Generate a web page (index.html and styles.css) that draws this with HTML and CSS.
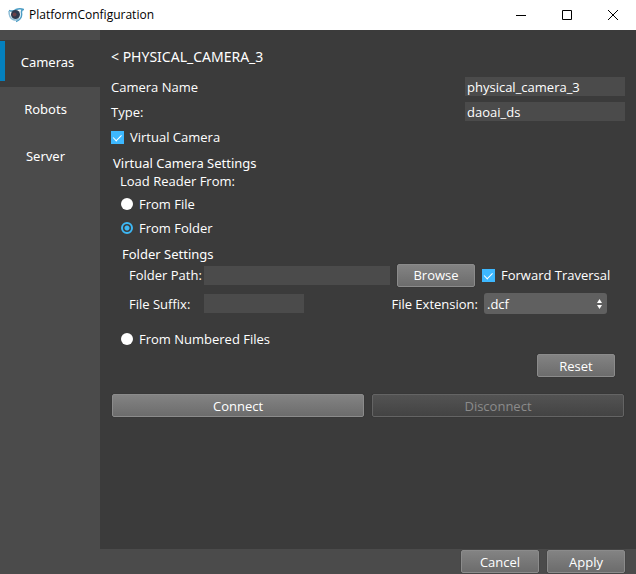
FILE: index.html
```html
<!DOCTYPE html>
<html lang="en">
<head>
    <meta charset="utf-8">
    <title>PlatformConfiguration</title>
    <link rel="stylesheet" href="styles.css">
</head>
<body>
    <header class="titlebar">
        <svg class="logo" width="16" height="16" viewBox="0 0 16 16">
            <path d="M1 3.500 Q5 5 8 2.500 Q12 1 15.500 2.500 Q13 3 13.500 6 Q14.500 12 8 14.500" fill="none" stroke="#4b9cc4" stroke-width="1.5"/>
            <path d="M1 4 Q1 11 5 12.500 Q9 14 12 11" fill="none" stroke="#8fbdd6" stroke-width="1.5"/>
            <circle cx="7.500" cy="7.500" r="4.500" fill="#2e3a50"/>
            <circle cx="6.500" cy="7.500" r="2" fill="#6a4048"/>
        </svg>
        <span class="window-title">PlatformConfiguration</span>
        <button class="win-btn" aria-label="Minimize"><svg width="12" height="12" viewBox="0 0 12 12"><path d="M1 6.500h10"/></svg></button>
        <button class="win-btn" aria-label="Maximize"><svg width="12" height="12" viewBox="0 0 12 12"><path d="M1.500 1.500h9v9h-9z"/></svg></button>
        <button class="win-btn" aria-label="Close"><svg width="12" height="12" viewBox="0 0 12 12"><path d="M1 1l10 10M11 1L1 11"/></svg></button>
    </header>

    <div class="main">
        <nav class="sidebar">
            <a href="#cameras" class="tab active">Cameras</a>
            <a href="#robots" class="tab">Robots</a>
            <a href="#server" class="tab">Server</a>
        </nav>

        <form class="content">
            <a href="#cameras" class="back">&lt; PHYSICAL_CAMERA_3</a>

            <div class="row">
                <label for="name">Camera Name</label>
                <input type="text" id="name" class="field" value="physical_camera_3">
            </div>
            <div class="row">
                <label for="type">Type:</label>
                <input type="text" id="type" class="field" value="daoai_ds">
            </div>
            <label class="option"><input type="checkbox" checked>Virtual Camera</label>

            <section class="settings">
                <h2>Virtual Camera Settings</h2>
                <div class="reader">
                    <h3 class="caption">Load Reader From:</h3>
                    <label class="option"><input type="radio" name="reader">From File</label>
                    <label class="option"><input type="radio" name="reader" checked>From Folder</label>

                    <div class="folder">
                        <h3>Folder Settings</h3>
                        <div class="folder-row path-row">
                            <label for="path" class="field-label">Folder Path:</label>
                            <input type="text" id="path" class="field">
                            <button type="button" class="btn">Browse</button>
                            <label class="option traversal"><input type="checkbox" checked>Forward Traversal</label>
                        </div>
                        <div class="folder-row">
                            <label for="suffix" class="field-label">File Suffix:</label>
                            <input type="text" id="suffix" class="field suffix">
                            <label for="ext" class="ext-label">File Extension:</label>
                            <div class="select">
                                <select id="ext"><option>.dcf</option></select>
                                <svg width="5" height="10" viewBox="0 0 5 10"><path d="M0 4L2.500 0L5 4zM0 6L2.500 10L5 6z" fill="#fff"/></svg>
                            </div>
                        </div>
                    </div>

                    <label class="option"><input type="radio" name="reader">From Numbered Files</label>
                </div>
            </section>

            <div class="reset">
                <button type="button" class="btn">Reset</button>
            </div>
            <div class="connection">
                <button type="button" class="btn">Connect</button>
                <button type="button" class="btn" disabled>Disconnect</button>
            </div>
        </form>
    </div>

    <footer class="footer">
        <button class="btn">Cancel</button>
        <button class="btn">Apply</button>
    </footer>
</body>
</html>
```
FILE: styles.css
```css
* { box-sizing: border-box; }
body {
    margin: 0;
    min-height: 100vh;
    display: flex;
    flex-direction: column;
    background: #4b4b4b;
    color: #fff;
    font: 13px/18px "Open Sans", sans-serif;
}
button, input, select { font: inherit; color: inherit; margin: 0; }
a { color: inherit; text-decoration: none; }
h2, h3 { margin: 0; font: 13px/18px "Noto Sans", sans-serif; }
h3.caption { font-family: "Open Sans", sans-serif; }

/* window title bar */
.titlebar { display: flex; align-items: center; height: 30px; padding-left: 8px; background: #fff; color: #000; }
.window-title { flex: 1; margin-left: 5px; font-size: 12px; }
.win-btn { display: flex; align-items: center; justify-content: center; width: 46px; height: 28px; padding: 0; border: 0; background: none; }
.win-btn path { fill: none; stroke: #000; }

.main { flex: 1; display: flex; }

.sidebar { width: 100px; padding-top: 10px; flex-shrink: 0; font-family: "Noto Sans", sans-serif; }
.tab { position: relative; display: block; height: 47px; padding-right: 9px; line-height: 45px; text-align: center; }
.tab.active { padding-right: 5px; background: #3b3b3b; }
.tab.active::before { content: ""; position: absolute; left: 0; top: 1px; width: 5px; height: 40px; background: #0480be; }

.content { flex: 1; min-width: 0; padding: 17px 11px 0; background: #3b3b3b; }
.back { display: block; margin-bottom: 10px; font: 14px/20px "Noto Sans", sans-serif; }
.row { display: flex; justify-content: space-between; align-items: center; height: 19px; margin-bottom: 6px; }
.field { width: 160px; height: 19px; padding: 0 2px; border: 0; background: #4b4b4b; outline: none; }

.option { display: flex; align-items: center; height: 20px; }
input[type=checkbox], input[type=radio] { appearance: none; width: 13px; height: 13px; margin-right: 6px; flex-shrink: 0; }
input[type=checkbox] { background: #3db8ff; }
input[type=checkbox]:checked::before { content: ""; display: block; width: 7px; height: 4px; margin: 4px 3px; border: solid #fff; border-width: 0 0 1px 1px; transform: rotate(-45deg) translateY(-1px); }
input[type=radio] { width: 12px; height: 12px; border-radius: 50%; background: #fff; }
input[type=radio]:checked { border: 2px solid #3db8f5; background: radial-gradient(circle, #3db8f5 2px, #3b3b3b 3px); }

.settings { padding-left: 2px; margin-top: 7px; }
.reader { padding-left: 7px; }
.reader > .option { margin: 4px 0 4px 1px; }
.folder { margin: 7px 18px 15px 2px; }
.folder-row { display: flex; align-items: center; height: 21px; padding-left: 7px; }
.path-row { height: 24px; margin-bottom: 6px; }
.path-row .field { flex: 1; width: auto; min-width: 0; margin-right: 7px; }
.field-label { width: 75px; }
.field.suffix { width: 100px; }
.traversal { width: 125px; margin-left: 7px; white-space: nowrap; }
.ext-label { margin-left: auto; margin-right: 6px; }

.select { position: relative; width: 123px; height: 21px; }
.select select { appearance: none; width: 100%; height: 21px; padding: 0 3px; border: 0; border-radius: 3px; background: #606060; }
.select svg { position: absolute; right: 5px; top: 6px; pointer-events: none; }

.btn {
    width: 78px;
    height: 23px;
    padding: 0;
    border: 1px solid #8b8b8b;
    border-radius: 2px;
    background: linear-gradient(#838383, #6c6c6c);
    box-shadow: 0 0 1px #222;
}
.btn:disabled { color: #8b8b8b; border-color: #646464; background: linear-gradient(#535353, #434343); }

.reset { display: flex; justify-content: flex-end; padding: 1px 10px 0 0; }
.connection { display: flex; gap: 8px; margin-top: 17px; padding: 0 1px; }
.connection .btn { flex: 1; }

.footer { display: flex; justify-content: flex-end; gap: 8px; height: 25px; padding: 1px 11px; }
```
